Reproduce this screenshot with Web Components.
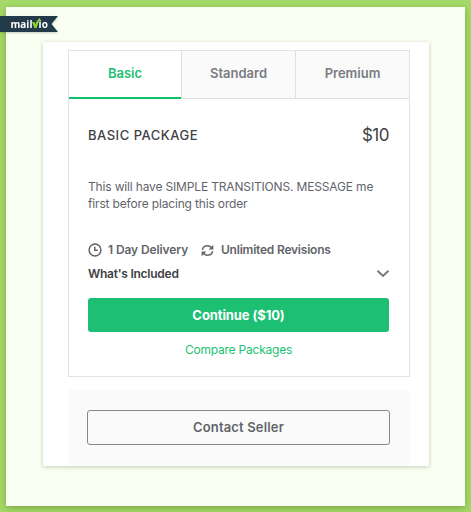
<!DOCTYPE html>
<html lang="en">
<head>
<meta charset="utf-8">
<title>Packages</title>
<style>
  body {
    margin: 0;
    font-family: Inter, "Liberation Sans", sans-serif;
    color: #404145;
  }
</style>
</head>
<body>
<page-frame>
  <brand-ribbon slot="brand"></brand-ribbon>
  <package-card tabs="Basic,Standard,Premium" name="BASIC PACKAGE" price="$10">
    This will have SIMPLE TRANSITIONS. MESSAGE me first before placing this order
  </package-card>
  <contact-box>Contact Seller</contact-box>
</page-frame>

<script>
class PageFrame extends HTMLElement {
  constructor() {
    super();
    this.attachShadow({ mode: 'open' });
    this.shadowRoot.innerHTML = `
      <style>
        :host {
          display: block;
          box-sizing: border-box;
          position: relative;
          height: 512px;
          padding: 7px 6px 6px;
          overflow: hidden;
          background: #a5da68;
        }
        .panel {
          box-sizing: border-box;
          height: 499px;
          width: 459px;
          padding: 35px 36px 0 37px;
          background: #f9fff0;
          box-shadow: 0 2px 7px rgba(60, 90, 20, 0.4);
        }
        .card {
          box-sizing: border-box;
          height: 424px;
          padding: 8px 19px 0 25px;
          background: #fff;
          box-shadow: 0 1px 4px rgba(0, 0, 0, 0.22);
        }
      </style>
      <slot name="brand"></slot>
      <div class="panel"><div class="card"><slot></slot></div></div>
    `;
  }
}

class BrandRibbon extends HTMLElement {
  constructor() {
    super();
    this.attachShadow({ mode: 'open' });
    this.shadowRoot.innerHTML = `
      <style>
        :host {
          display: block;
          position: absolute;
          left: 0;
          top: 16px;
          width: 58px;
          height: 16px;
          filter: drop-shadow(0 1px 1px rgba(0, 0, 0, 0.2));
        }
        .flag {
          box-sizing: border-box;
          height: 16px;
          padding-left: 10.5px;
          clip-path: polygon(0 0, 100% 0, 51.5px 50%, 100% 100%, 0 100%);
          background: #223a49;
          color: #fff;
          font: 700 10px/16px "Open Sans", sans-serif;
          white-space: nowrap;
        }
        b { position: relative; color: #8ed32d; }
        /* long right arm that turns the v into a tick */
        svg { position: absolute; left: 0; bottom: 3px; }
      </style>
      <div class="flag">mail<b>v<svg width="9" height="10" viewBox="0 0 9 10"><path d="M.8 4.2l2.200 4.600Q4.500 4 8 .7" fill="none" stroke="#8ed32d" stroke-width="1.6"/></svg></b>io</div>
    `;
  }
}

class PackageCard extends HTMLElement {
  constructor() {
    super();
    this.attachShadow({ mode: 'open' });
    this.render();
  }

  render() {
    this.shadowRoot.innerHTML = `
      <style>
        :host {
          display: block;
          box-sizing: border-box;
          width: 342px;
          height: 327px;
          border: 1px solid #e2e2e3;
        }
        nav {
          display: grid;
          grid-template-columns: 112px 114px 114px;
          height: 48px;
        }
        nav span {
          box-sizing: border-box;
          border-bottom: 1px solid #dfdfe0;
          border-left: 1px solid #dfdfe0;
          background: #fafafa;
          color: #7a7c84;
          font-size: 13px;
          font-weight: 600;
          line-height: 44px;
          text-align: center;
        }
        nav span:first-child {
          border-left: 0;
          border-bottom: 2px solid #10c16c;
          background: #fff;
          color: #1dbf73;
        }
        .body { padding: 0 20px 0 19px; }
        .head {
          display: flex;
          justify-content: space-between;
          align-items: center;
          height: 24px;
          margin-top: 24px;
        }
        .name { font-size: 13px; font-weight: 500; letter-spacing: 0.5px; }
        .price { font-size: 17px; letter-spacing: -0.5px; }
        p {
          margin: 31px 0 0;
          width: 300px;
          color: #62646a;
          font-size: 12px;
          line-height: 17px;
          letter-spacing: -0.16px;
        }
        .features {
          display: flex;
          align-items: center;
          height: 20px;
          margin-top: 27px;
          color: #62646a;
          font-size: 12px;
          font-weight: 600;
          letter-spacing: -0.22px;
          white-space: nowrap;
        }
        .features svg { flex: none; position: relative; top: 1px; }
        .features .days { width: 93px; margin-left: 6px; letter-spacing: -0.1px; }
        .features .revisions { margin-left: 7px; }
        .included {
          display: flex;
          align-items: center;
          justify-content: space-between;
          height: 24px;
          margin-top: 2px;
          font-size: 12px;
          font-weight: 600;
          letter-spacing: -0.25px;
        }
        .included svg { margin-right: -1px; }
        button {
          display: block;
          width: 301px;
          height: 34px;
          padding: 0;
          margin-top: 13px;
          border: 0;
          border-radius: 3px;
          background: #1dbf73;
          color: #fff;
          font: inherit;
          font-size: 13px;
          font-weight: 700;
          letter-spacing: -0.1px;
        }
        .compare {
          height: 20px;
          margin-top: 8px;
          color: #1dbf73;
          font-size: 12px;
          line-height: 20px;
          letter-spacing: -0.22px;
          text-align: center;
        }
      </style>
      <nav></nav>
      <div class="body">
        <div class="head"><span class="name"></span><span class="price"></span></div>
        <p><slot></slot></p>
        <div class="features">
          <svg width="14" height="14" viewBox="0 0 14 14" fill="none" stroke="#62646a" stroke-width="1.5"><circle cx="7" cy="7" r="5.9"/><path d="M6.8 3.8v3.5h3"/></svg>
          <span class="days">1 Day Delivery</span>
          <svg width="13" height="13" viewBox="0 0 14 14" fill="none" stroke="#62646a" stroke-width="1.6"><path d="M1.5 6.2C2 3.2 4.3 1.8 7 1.8c1.8 0 3.3.8 4.4 2.2M12.5 7.8c-.5 3-2.8 4.4-5.5 4.4-1.8 0-3.3-.8-4.4-2.2"/><path d="M13.3.8v5h-5zM.7 13.2v-5h5z" fill="#62646a" stroke="none"/></svg>
          <span class="revisions">Unlimited Revisions</span>
        </div>
        <div class="included">
          <span>What's Included</span>
          <svg width="14" height="9" viewBox="0 0 14 9" fill="none" stroke="#74767e" stroke-width="1.9"><path d="M1.5 1.7L7 7l5.5-5.3"/></svg>
        </div>
        <button>Continue ($10)</button>
        <div class="compare">Compare Packages</div>
      </div>
    `;

    const nav = this.shadowRoot.querySelector('nav');
    nav.innerHTML = this.getAttribute('tabs')
      .split(',')
      .map(tab => `<span>${tab}</span>`)
      .join('');
    this.shadowRoot.querySelector('.name').textContent = this.getAttribute('name');
    this.shadowRoot.querySelector('.price').textContent = this.getAttribute('price');
  }
}

class ContactBox extends HTMLElement {
  constructor() {
    super();
    this.attachShadow({ mode: 'open' });
    this.shadowRoot.innerHTML = `
      <style>
        :host {
          display: block;
          box-sizing: border-box;
          width: 342px;
          height: 75px;
          margin-top: 13px;
          padding: 20px 20px 0 19px;
          background: #fafafa;
        }
        button {
          display: block;
          width: 303px;
          height: 35px;
          padding: 0 0 2px;
          border: 1px solid #858790;
          border-radius: 3px;
          background: transparent;
          color: #62646a;
          font: inherit;
          font-size: 13px;
          font-weight: 600;
          letter-spacing: 0.15px;
        }
      </style>
      <button><slot></slot></button>
    `;
  }
}

customElements.define('page-frame', PageFrame);
customElements.define('brand-ribbon', BrandRibbon);
customElements.define('package-card', PackageCard);
customElements.define('contact-box', ContactBox);
</script>
</body>
</html>
